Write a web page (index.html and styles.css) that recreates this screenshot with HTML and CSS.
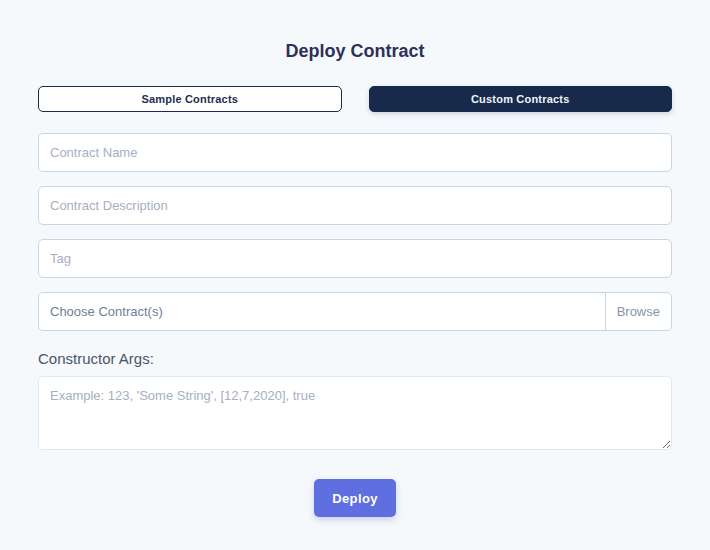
FILE: index.html
```
<!DOCTYPE html>
<html>
<head>
<meta charset="utf-8">
<link rel="stylesheet" href="styles.css">
</head>
<body>
<div class="page">
  <h1 class="title">Deploy Contract</h1>
  <div class="tabs">
    <button class="tab tab-outline">Sample Contracts</button>
    <button class="tab tab-solid">Custom Contracts</button>
  </div>
  <div class="fields">
    <input class="field" type="text" placeholder="Contract Name">
    <input class="field" type="text" placeholder="Contract Description">
    <input class="field" type="text" placeholder="Tag">
    <div class="file">
      <span class="file-label">Choose Contract(s)</span>
      <span class="file-browse">Browse</span>
    </div>
  </div>
  <label class="args-label">Constructor Args:</label>
  <textarea class="args" placeholder="Example: 123, 'Some String', [12,7,2020], true"></textarea>
  <div class="actions">
    <button class="deploy">Deploy</button>
  </div>
</div>
</body>
</html>
```
FILE: styles.css
```
* { box-sizing: border-box; }
html, body { margin: 0; padding: 0; }
body {
  background: #f5f9fc;
  font-family: "Liberation Sans", Arial, sans-serif;
  width: 710px;
  height: 550px;
  overflow: hidden;
}
.page {
  padding: 40px 38px 0 38px;
  display: flex;
  flex-direction: column;
}
.title {
  margin: 0;
  text-align: center;
  font-size: 18px;
  font-weight: bold;
  color: #2e3058;
  line-height: 22px;
}
.tabs {
  margin-top: 24px;
  display: flex;
  gap: 27px;
}
.tab {
  flex: 1;
  height: 26px;
  border-radius: 5px;
  font-family: "Liberation Sans", Arial, sans-serif;
  font-size: 11px;
  font-weight: bold;
  letter-spacing: 0.2px;
  padding: 0;
  cursor: pointer;
}
.tab-outline {
  background: #ffffff;
  border: 1px solid #1a2a4a;
  color: #1f2d4d;
}
.tab-solid {
  background: #172a4b;
  border: 1px solid #172a4b;
  color: #f2f4f8;
  box-shadow: 0 2px 5px rgba(23, 42, 75, 0.18);
}
.fields {
  margin-top: 21px;
  display: flex;
  flex-direction: column;
  gap: 14px;
}
.field {
  height: 39px;
  width: 100%;
  border: 1px solid #cbd5e0;
  border-radius: 5px;
  background: #ffffff;
  padding: 0 11px;
  font-family: "Liberation Sans", Arial, sans-serif;
  font-size: 13px;
  color: #4a5568;
  outline: none;
}
.field::placeholder { color: #a6b0bf; }
.file {
  height: 39px;
  display: flex;
  border: 1px solid #cbd5e0;
  border-radius: 5px;
  background: #ffffff;
  font-size: 13px;
  overflow: hidden;
}
.file-label {
  flex: 1;
  display: flex;
  align-items: center;
  padding: 0 11px;
  color: #718096;
}
.file-browse {
  display: flex;
  align-items: center;
  padding: 0 11px;
  border-left: 1px solid #cbd5e0;
  color: #8a94a6;
}
.args-label {
  margin-top: 19px;
  font-size: 15px;
  color: #4a5568;
  line-height: 18px;
}
.args {
  margin-top: 8px;
  height: 74px;
  width: 100%;
  border: 1px solid #e3e8ee;
  border-radius: 5px;
  background: #ffffff;
  padding: 11px 11px 10px;
  font-family: "Liberation Sans", Arial, sans-serif;
  font-size: 13px;
  color: #4a5568;
  resize: vertical;
  outline: none;
}
.args::placeholder { color: #a6b0bf; }
.actions {
  margin-top: 29px;
  display: flex;
  justify-content: center;
}
.deploy {
  width: 82px;
  height: 38px;
  border: none;
  border-radius: 5px;
  background: #5f6fe0;
  color: #ffffff;
  font-family: "Liberation Sans", Arial, sans-serif;
  font-size: 13px;
  font-weight: bold;
  letter-spacing: 0.4px;
  box-shadow: 0 3px 6px rgba(80, 90, 200, 0.25);
}
```
